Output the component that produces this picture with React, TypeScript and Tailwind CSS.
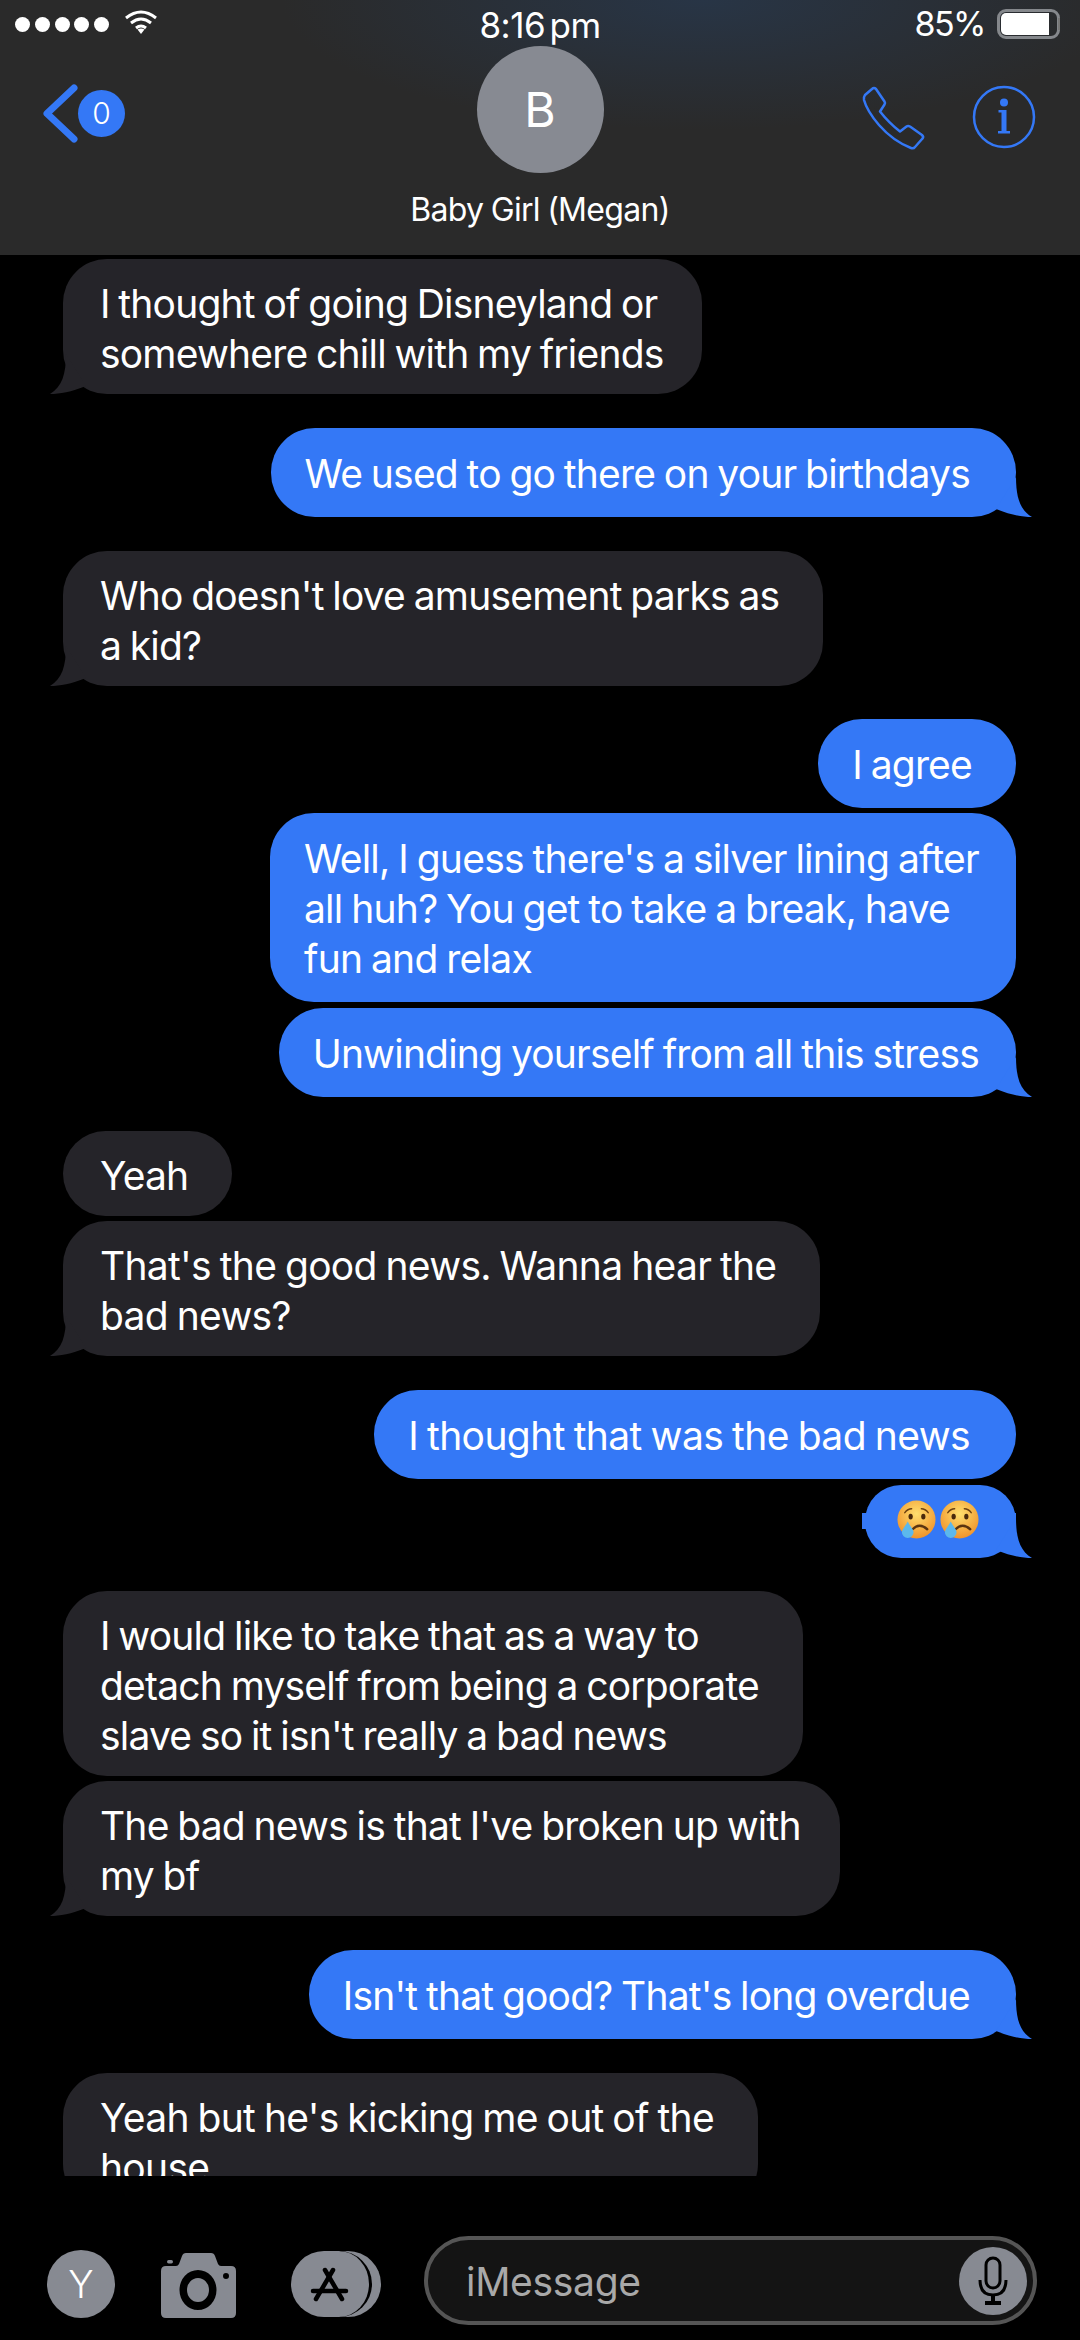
type Msg = { text: string[]; me?: boolean; tail?: boolean; mt: string; py: string; pad?: string; track?: string };

const TWO_LINE = 'pt-[19.5px] pb-[15.5px]';
const ONE_LINE = 'pt-[21px] pb-[18px]';

const messages: Msg[] = [
    { text: ['I thought of going Disneyland or', 'somewhere chill with my friends'], tail: true, mt: 'mt-1', py: TWO_LINE, pad: 'pl-[37px] pr-[38px]' },
    { text: ['We used to go there on your birthdays'], me: true, tail: true, mt: 'mt-[34px]', py: ONE_LINE },
    { text: ["Who doesn't love amusement parks as", 'a kid?'], tail: true, mt: 'mt-[34px]', py: TWO_LINE },
    { text: ['I agree'], me: true, mt: 'mt-[33px]', py: ONE_LINE, pad: 'pl-[34px] pr-[44px]' },
    { text: ["Well, I guess there's a silver lining after", 'all huh? You get to take a break, have', 'fun and relax'], me: true, mt: 'mt-[5px]', py: ONE_LINE, pad: 'pl-[34px] pr-[37px]', track: 'tracking-[-0.75px]' },
    { text: ['Unwinding yourself from all this stress'], me: true, tail: true, mt: 'mt-[6px]', py: ONE_LINE, pad: 'pl-[34px] pr-[37px]' },
    { text: ['Yeah'], mt: 'mt-[34px]', py: TWO_LINE },
    { text: ["That's the good news. Wanna hear the", 'bad news?'], tail: true, mt: 'mt-[5px]', py: TWO_LINE, track: 'tracking-[-0.7px]' },
    { text: ['I thought that was the bad news'], me: true, mt: 'mt-[34px]', py: ONE_LINE, track: 'tracking-[-0.6px]' },
];

const messages2: Msg[] = [
    { text: ['I would like to take that as a way to', 'detach myself from being a corporate', "slave so it isn't really a bad news"], mt: 'mt-[33px]', py: TWO_LINE },
    { text: ["The bad news is that I've broken up with", 'my bf'], tail: true, mt: 'mt-[5px]', py: TWO_LINE, pad: 'pl-[37px] pr-[39px]' },
    { text: ["Isn't that good? That's long overdue"], me: true, tail: true, mt: 'mt-[34px]', py: ONE_LINE },
    { text: ["Yeah but he's kicking me out of the", 'house'], mt: 'mt-[34px]', py: TWO_LINE, track: 'tracking-[-0.7px]' },
];

function Tail({ me }: { me?: boolean }) {
    if (me) {
        return (
            <svg className="absolute bottom-0 right-[-16px]" width="36" height="40" viewBox="0 0 36 40">
                <path d="M20 0 C20 20 24 33 36 40 C26 40 15 38 0 32 Z" fill="#3478f6" />
            </svg>
        );
    }
    return (
        <svg className="absolute bottom-0 left-[-13px]" width="36" height="40" viewBox="0 0 36 40">
            <path d="M16 0 C16 20 12 33 0 40 C10 40 21 38 36 32 Z" fill="#252429" />
        </svg>
    );
}

function Bubble({ m }: { m: Msg }) {
    const color = m.me ? 'bg-[#3478f6] self-end' : 'bg-[#252429] self-start';
    const pad = m.pad ?? (m.me ? 'pl-[34px] pr-[46px]' : 'pl-[37px] pr-[44px]');
    const track = m.track ?? 'tracking-[-0.8px]';
    return (
        <div className={`relative shrink-0 ${color} ${pad} ${track} ${m.mt} ${m.py} w-fit rounded-[44px] text-[39px] leading-[50px] [word-spacing:-1.5px] text-white whitespace-nowrap`}>
            {m.text.map((line) => (
                <div key={line}>{line}</div>
            ))}
            {m.tail && <Tail me={m.me} />}
        </div>
    );
}

function CryEmoji({ id }: { id: string }) {
    return (
        <svg width="39" height="39" viewBox="0 0 40 40">
            <defs>
                <radialGradient id={id} cx="50%" cy="35%" r="65%">
                    <stop offset="0%" stopColor="#ffdf6e" />
                    <stop offset="100%" stopColor="#f0932b" />
                </radialGradient>
            </defs>
            <circle cx="20" cy="20" r="19.5" fill={`url(#${id})`} />
            <path d="M8 13 Q11 9 15 9 M25 9 Q29 9 32 13" stroke="#6b4010" strokeWidth="1.5" fill="none" strokeLinecap="round" />
            <ellipse cx="14" cy="17" rx="2.2" ry="3" fill="#4a2a0c" />
            <ellipse cx="27" cy="17" rx="2.2" ry="3" fill="#4a2a0c" />
            <path d="M16 30 Q23 23 31 30" stroke="#5a3410" strokeWidth="2.4" fill="none" strokeLinecap="round" />
            <path d="M11 22 C8 28 5 30 5 33 A6 6 0 0 0 17 33 C17 30 14 28 11 22 Z" fill="#5cb8ec" />
        </svg>
    );
}

function StatusBar() {
    return (
        <div className="relative flex h-[46px] items-start justify-between pl-[15px] pr-[20px] pt-[9px] text-white">
            <div className="flex items-center pt-[5px]">
                <div className="flex gap-[4.75px]">
                    {[0, 1, 2, 3, 4].map((i) => (
                        <div key={i} className="h-[15px] w-[15px] rounded-full bg-white" />
                    ))}
                </div>
                <svg className="ml-[15px] mt-[-5px]" width="34" height="26" viewBox="0 0 34 26" fill="none" stroke="#fff" strokeWidth="3">
                    <path d="M2 9 Q17 -3 32 9" />
                    <path d="M7 14 Q17 6 27 14" />
                    <path d="M12 19 Q17 15 22 19" />
                    <path d="M17 25 L13.5 20.5 Q17 18.5 20.5 20.5 Z" fill="#fff" stroke="none" />
                </svg>
            </div>
            <div className="absolute left-0 right-0 top-[5px] text-center text-[35px] leading-[41px] tracking-[-0.5px] [word-spacing:-5px]">8:16 pm</div>
            <div className="flex items-center gap-[12px]">
                <span className="text-[34px] leading-[30px] tracking-[-1.5px]">85%</span>
                <div className="h-[30px] w-[63px] rounded-[9px] border-[3px] border-[#85888c] p-[1px]">
                    <div className="h-full w-[48px] rounded-l-[5px] bg-white" />
                </div>
            </div>
            <div className="absolute right-[20px] top-[18px] h-[12px] w-[2px] bg-[#777777]" />
        </div>
    );
}

function Header() {
    return (
        <div className="h-[255px] shrink-0 bg-[#2a2a2a] bg-[radial-gradient(ellipse_420px_130px_at_65%_0%,#283546_0%,#2a2a2a_100%)]">
            <StatusBar />
            <div className="relative flex justify-center">
                <div className="flex h-[127px] w-[127px] items-center justify-center rounded-full bg-[#878a92] text-[48px] text-white">B</div>
                <div className="absolute left-[43px] top-[38px] flex items-center">
                    <svg width="36" height="59" viewBox="0 0 36 59" fill="none" stroke="#3478f6" strokeWidth="7" strokeLinecap="round" strokeLinejoin="round">
                        <path d="M31 4 L4 29.5 L31 55" />
                    </svg>
                    <div className="ml-[-1px] flex h-[47px] w-[47px] items-center justify-center rounded-full bg-[#3478f6] text-[30px] font-light text-white">0</div>
                </div>
                <svg className="absolute left-[861px] top-[39px]" width="66" height="66" viewBox="-2 -2 66 66" fill="none" stroke="#3478f6" strokeWidth="2.5" strokeLinejoin="round">
                    <path d="M9 2 Q11 0 13 2 L21.5 14.5 Q22.5 16 21.5 17.5 L17 24.5 Q26 36 37 44.5 L43.5 39.5 Q45 38.5 47 39.5 L59 48 Q61 50 59.5 51.5 L52 60 Q50.5 62 48 61 Q30 54 16 38 Q4 24 1 13 Q0.5 10 2 8 Z" />
                </svg>
                <svg className="absolute left-[972px] top-[39px]" width="64" height="64" viewBox="0 0 64 64" fill="#3478f6">
                    <circle cx="32" cy="32" r="30" fill="none" stroke="#3478f6" strokeWidth="2.5" />
                    <circle cx="32" cy="17.5" r="4" />
                    <path d="M26.5 25 H34.5 V46 H38 V48.5 H26 V46 H29.5 V27.5 H26.5 Z" />
                </svg>
            </div>
            <div className="mt-[17px] text-center text-[32px] leading-[40px] tracking-[-0.7px] [word-spacing:-1px] text-white">Baby Girl (Megan)</div>
        </div>
    );
}

function InputBar() {
    return (
        <div className="flex h-[164px] shrink-0 items-start pl-[47px] pt-[60px]">
            <div className="mt-[14px] flex h-[68px] w-[68px] items-center justify-center rounded-full bg-[#878a92] text-[38px] font-light text-white">Y</div>
            <svg className="ml-[46px] mt-[17px]" width="75" height="65" viewBox="0 0 75 65">
                <path fillRule="evenodd" fill="#878a92" d="M5 13 H15 Q17 13 18 11 L21 3 Q22 0 25 0 H50 Q53 0 54 3 L57 11 Q58 13 60 13 H70 Q75 13 75 18 V60 Q75 65 70 65 H5 Q0 65 0 60 V18 Q0 13 5 13 Z M37 17 A18.5 20 0 1 0 37 57 A18.5 20 0 1 0 37 17 Z M37 25 A11 12 0 1 1 37 49 A11 12 0 1 1 37 25 Z M65 20 A3 3 0 1 0 65 26 A3 3 0 1 0 65 20 Z" />
                <rect x="6" y="7" width="6" height="3.5" rx="1.7" fill="#878a92" />
            </svg>
            <div className="relative ml-[55px] mt-[15px] h-[66px] w-[90px]">
                <div className="absolute right-0 top-0 h-[66px] w-[66px] rounded-full bg-[#878a92]" />
                <div className="absolute left-0 top-0 h-[66px] w-[81px] rounded-full border-r-[3px] border-black bg-[#878a92]" />
                <svg className="absolute left-[19px] top-[16px]" width="39" height="35" viewBox="0 0 39 35" fill="none" stroke="#000" strokeWidth="4.5" strokeLinecap="round">
                    <path d="M23 3 L6 32" />
                    <path d="M15 3 L32 32" />
                    <path d="M3 24 H36" />
                </svg>
            </div>
            <div className="ml-[43px] flex h-[89px] w-[613px] items-center rounded-full border-4 border-[#555555] bg-[#141414] pl-[38px] pr-[6px]">
                <span className="flex-1 pt-[4px] text-[39px] tracking-[-0.3px] text-[#a9a9a9]">iMessage</span>
                <div className="flex h-[68px] w-[68px] items-center justify-center rounded-full bg-[#878a92]">
                    <svg width="30" height="50" viewBox="0 0 30 50" fill="none" stroke="#000" strokeWidth="3">
                        <rect x="8" y="2" width="14" height="30" rx="7" />
                        <path d="M2 24 Q2 39 15 39 Q28 39 28 24" />
                        <path d="M15 39 V47 M7 47 H23" strokeWidth="4" />
                    </svg>
                </div>
            </div>
        </div>
    );
}

export default function App() {
    return (
        <div className="flex h-[2340px] w-[1080px] flex-col overflow-hidden bg-black font-['Inter',sans-serif]">
            <Header />
            <div className="flex min-h-0 flex-1 flex-col overflow-hidden pl-[63px] pr-[64px]">
                {messages.map((m) => (
                    <Bubble key={m.text[0]} m={m} />
                ))}
                <div className="relative mt-[6px] flex h-[73px] w-[151px] shrink-0 items-center justify-center gap-[4px] self-end rounded-[36px] bg-[#3478f6] pb-[4px] pr-[5px]">
                    <CryEmoji id="face-a" />
                    <CryEmoji id="face-b" />
                    <div className="absolute left-[-3px] top-[28px] h-[16px] w-[4px] bg-[#3478f6]" />
                    <div className="absolute right-0 top-[28px] h-[18px] w-[4px] bg-[#3478f6]" />
                    <Tail me />
                </div>
                {messages2.map((m) => (
                    <Bubble key={m.text[0]} m={m} />
                ))}
            </div>
            <InputBar />
        </div>
    );
}
